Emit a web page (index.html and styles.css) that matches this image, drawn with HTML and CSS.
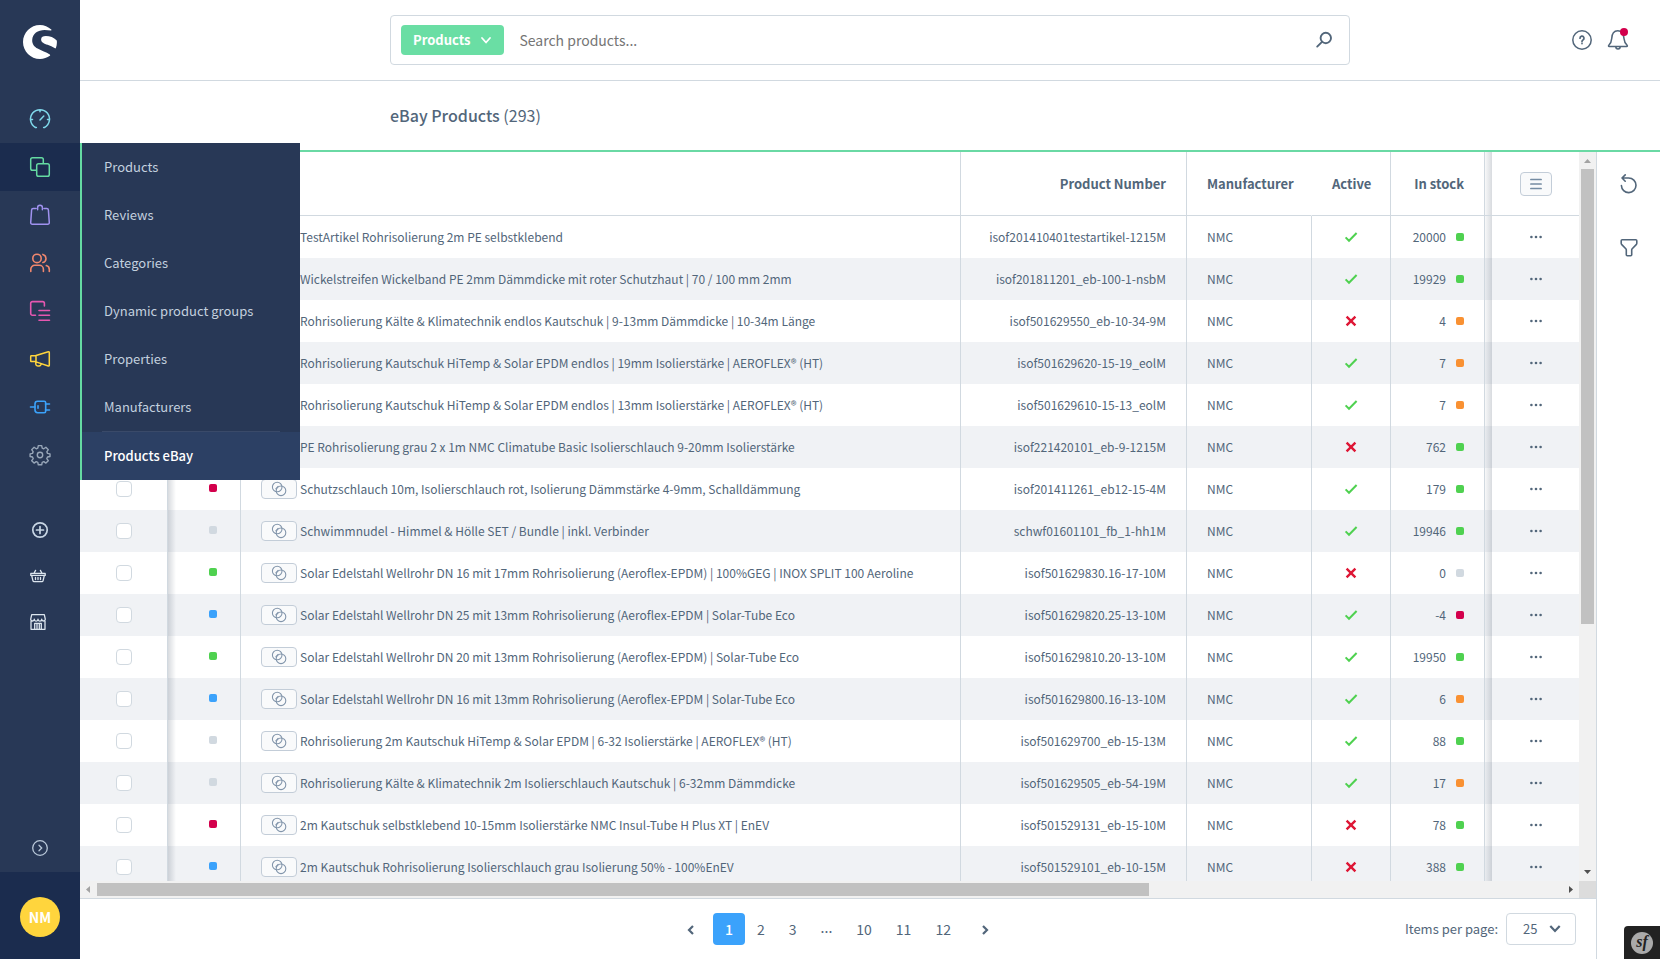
FILE: index.html
```
<!DOCTYPE html>
<html lang="en">
<head>
<meta charset="utf-8">
<title>eBay Products</title>
<link rel="stylesheet" href="styles.css">
</head>
<body>
<svg class="sprite" aria-hidden="true">
  <symbol id="i-link" viewBox="0 0 16 16"><g fill="none" stroke="#8295ab" stroke-width="1.1"><circle cx="6.2" cy="6" r="4.8"/><circle cx="10" cy="9.8" r="4.8"/><path d="M4.6 8.2 7.4 5"/></g></symbol>
  <symbol id="i-check" viewBox="0 0 14 14"><path d="M1.6 7.4 5 10.8 12.6 3" fill="none" stroke="#4fd150" stroke-width="2"/></symbol>
  <symbol id="i-cross" viewBox="0 0 14 14"><path d="M2.6 2.6 11.4 11.4M11.4 2.6 2.6 11.4" fill="none" stroke="#de1635" stroke-width="2.4"/></symbol>
  <symbol id="i-dots" viewBox="0 0 12 4"><g fill="#52667a"><circle cx="1.4" cy="2" r="1.3"/><circle cx="6" cy="2" r="1.3"/><circle cx="10.6" cy="2" r="1.3"/></g></symbol>
</svg>

<aside class="sidebar">
  <a class="logo" href="#" aria-label="Shopware">
    <svg width="34" height="34" viewBox="0 0 34 34" fill="#fff"><path d="M28.3 4.6C25.2 1.8 21.200 0 17 0 7.600 0 0 7.600 0 17s7.600 17 17 17c3.700 0 7.200-1.200 9.900-3.200.4-.3.300-.9-.1-1.200-3.600-2.600-8.300-3.600-12.200-6C11.400 21.700 9 19 9.200 14.900 9.500 8.500 15 4.900 21.500 4.900c2.300 0 4.500.3 6.500.6.500.100.700-.5.300-.9z"/><path d="M33.500 15.300c-2.500-2.800-6.600-4.300-10.700-4.300-2.600 0-4.700 1-4.700 3.400 0 2.900 3.200 4.100 6.500 5.400 2.500 1 5 2 7.400 3.500.3.200.8 0 .9-.4.900-2.300 1.200-5 .9-7.200z"/></svg>
  </a>
  <nav class="nav">
    <a href="#" aria-label="Dashboard"><svg width="22" height="22" viewBox="0 0 22 22" fill="none" stroke="#7fd8ea" stroke-width="1.500" stroke-linecap="round"><path d="M7.400 19.500H6.500A9.500 9.500 0 1 1 15.500 19.500H14.600M11 2v1.800M1.800 11.500H3.500M18.500 11.500h1.700M11 12l3.800-4"/></svg></a>
    <a href="#" aria-label="Catalogues" class="active"><svg width="22" height="22" viewBox="0 0 22 22" fill="none" stroke="#65dba2" stroke-width="1.500"><rect x="7.700" y="7.700" width="12.600" height="12.600" rx="1.800"/><path d="M7.700 14.300H3.500a1.800 1.800 0 0 1-1.800-1.800V3.500a1.800 1.800 0 0 1 1.800-1.800h9a1.800 1.800 0 0 1 1.800 1.800V7.700"/></svg></a>
    <a href="#" aria-label="Orders"><svg width="22" height="22" viewBox="0 0 22 22" fill="none" stroke="#a092f0" stroke-width="1.500" stroke-linecap="round"><path d="M6.600 4.500H4.200a1.600 1.600 0 0 0-1.600 1.500L1.700 18.600a1.600 1.600 0 0 0 1.600 1.700h15.400a1.600 1.600 0 0 0 1.600-1.700L19.400 6a1.600 1.600 0 0 0-1.600-1.500h-2.400M8.600 5.800V3.600a2.400 2.400 0 0 1 4.800 0V5.800M8.600 4.500h-.5M13.400 4.500h.5"/></svg></a>
    <a href="#" aria-label="Customers"><svg width="22" height="22" viewBox="0 0 22 22" fill="none" stroke="#f0876e" stroke-width="1.600" stroke-linecap="round"><circle cx="8" cy="6.400" r="4.200"/><path d="M1.800 19.500v-2.200a4 4 0 0 1 4-4h4.600a4 4 0 0 1 4 4v2.200M13.900 2.400a4.200 4.200 0 0 1 0 8.100M17.300 13.600a4 4 0 0 1 3 3.800v2.100"/></svg></a>
    <a href="#" aria-label="Content"><svg width="22" height="22" viewBox="0 0 22 22" fill="none" stroke="#e557b0" stroke-width="1.600" stroke-linecap="round"><path d="M6.500 15.300H3.400a1.700 1.700 0 0 1-1.700-1.700V3.300a1.700 1.700 0 0 1 1.700-1.700h10.300a1.700 1.700 0 0 1 1.700 1.700V6M10 10.500h10.500M10 15.300h10.500M10 20.200h10.500"/></svg></a>
    <a href="#" aria-label="Marketing"><svg width="22" height="22" viewBox="0 0 22 22" fill="none" stroke="#ffd53d" stroke-width="1.500" stroke-linejoin="round"><path d="M7 7.500 19.300 3.700a.8.800 0 0 1 1 .8v12.700a.8.800 0 0 1-1 .8L7 13.900zM7 7.800H2.400a.7.700 0 0 0-.7.700v4.400a.7.700 0 0 0 .7.700H7M6.800 14v2.200a2 2 0 0 0 2 1.800h1.300a2 2 0 0 0 1.900-2.200"/></svg></a>
    <a href="#" aria-label="Extensions"><svg width="22" height="22" viewBox="0 0 22 22" fill="none" stroke="#3ba2fb" stroke-width="1.600" stroke-linecap="round"><path d="M1.500 11H6M16.500 8h4M16.500 14h4M9 9.800v2.400"/><path d="M8.600 5.300h6.600a1.500 1.500 0 0 1 1.500 1.500v8.400a1.500 1.500 0 0 1-1.500 1.500H8.600A2.600 2.600 0 0 1 6 14.100V7.900a2.600 2.600 0 0 1 2.600-2.600z"/></svg></a>
    <a href="#" aria-label="Settings"><svg width="22" height="22" viewBox="0 0 22 22" fill="none" stroke="#98a6b8" stroke-width="1.400" stroke-linejoin="round"><circle cx="11" cy="11" r="2.700"/><path d="M9.300 1.600h3.400l.5 2.500 1.600.7 2.100-1.500 2.400 2.400-1.500 2.100.7 1.600 2.500.5v2.600l-2.500.5-.7 1.600 1.500 2.100-2.400 2.400-2.100-1.500-1.600.7-.5 2.500H9.300l-.5-2.500-1.600-.7-2.100 1.500-2.400-2.400 1.500-2.100-.7-1.600L1.100 12.500V9.900l2.400-.5.7-1.600-1.500-2.100 2.400-2.400 2.100 1.500 1.600-.7z"/></svg></a>
    <div class="flyout">
      <a href="#">Products</a><a href="#">Reviews</a><a href="#">Categories</a><a href="#">Dynamic product groups</a><a href="#">Properties</a><a href="#">Manufacturers</a>
      <hr>
      <a href="#" class="current">Products eBay</a>
    </div>
  </nav>
  <nav class="nav channels">
    <a href="#" aria-label="Add sales channel"><svg width="18" height="18" viewBox="0 0 18 18" fill="none" stroke="#c8d6e5" stroke-width="1.700" stroke-linecap="round"><circle cx="9" cy="9" r="7.200"/><path d="M9 5.500v7M5.500 9h7"/></svg></a>
    <a href="#" class="shift" aria-label="Storefront"><svg width="16" height="16" viewBox="0 0 16 16" fill="none" stroke="#dce5ee" stroke-width="1.300" stroke-linecap="round" stroke-linejoin="round"><path d="M.8 5.400h14.400v2H.8zM1.700 7.500l1.200 5.200a1.300 1.300 0 0 0 1.300 1h7.600a1.300 1.300 0 0 0 1.300-1L14.300 7.500M5.500 9.500v2M8 9.500v2M10.500 9.500v2M4 5.200 5.600 2.400M12 5.200 10.400 2.400"/></svg></a>
    <a href="#" class="shift" aria-label="Shop"><svg width="16" height="16" viewBox="0 0 16 16" fill="none" stroke="#dce5ee" stroke-width="1.300" stroke-linejoin="round"><path d="M1.700.7h12.600l1 4.500a1.700 1.700 0 0 1-3.600 0 1.700 1.700 0 0 1-3.700 0 1.700 1.700 0 0 1-3.700 0 1.700 1.700 0 0 1-3.600 0zM1 7v8.300h14V7M4.700 15V9.300h6.600V15M7 9.500V15M9.300 9.500V15"/></svg></a>
  </nav>
  <button class="collapse" aria-label="Expand menu"><svg width="18" height="18" viewBox="0 0 18 18" fill="none" stroke="#b9c8d9" stroke-width="1.300" stroke-linecap="round"><circle cx="9" cy="9" r="7.300"/><path d="M8 6.300 10.700 9 8 11.700"/></svg></button>
  <div class="user"><button class="avatar">NM</button></div>
</aside>

<main class="page">
  <header class="topbar">
    <form class="search">
      <button type="button" class="scope">Products <svg width="12" height="12" viewBox="0 0 12 12" fill="none" stroke="#fff" stroke-width="1.800" stroke-linecap="round" stroke-linejoin="round"><path d="M2 4l4 4.500L10 4"/></svg></button>
      <input type="text" placeholder="Search products..." aria-label="Search products">
      <button type="submit" class="icon" aria-label="Search"><svg width="18" height="18" viewBox="0 0 18 18" fill="none" stroke="#52667a" stroke-width="1.900" stroke-linecap="round"><circle cx="10.800" cy="7" r="5.200"/><path d="M7 10.800 2.200 15.600"/></svg></button>
    </form>
    <div class="tools">
      <button class="icon" aria-label="Help"><svg width="22" height="22" viewBox="0 0 22 22" fill="none" stroke="#52667a" stroke-width="1.500" stroke-linecap="round"><circle cx="11" cy="11" r="9.200"/><path d="M9 9.200a2 2 0 1 1 3 1.700c-.7.400-1 .8-1 1.500M11 14.400v.2" stroke-width="1.700"/></svg></button>
      <button class="icon" aria-label="Notifications"><svg width="22" height="22" viewBox="0 0 22 22" fill="none" stroke="#52667a" stroke-width="1.500" stroke-linejoin="round"><path d="M2.200 17.500c-.8 0-.9-.8-.4-1.300C3.700 14.500 4.500 12.500 4.700 9.600 4.900 5 6.400 1.800 10.800 1.800S16.700 5 17 9.600c.2 2.900 1.400 4.900 3.100 6.600.5.500.3 1.300-.4 1.300zM8.800 17.800a2.200 2.200 0 0 0 4.400 0"/></svg><span class="badge"></span></button>
    </div>
  </header>

  <div class="smartbar"><h1>eBay Products <span>(293)</span></h1></div>

  <div class="content">
    <section class="listing">
      <div class="scroller">
        <div class="viewport">
          <table class="grid">
            <colgroup><col class="c-select"><col class="c-status"><col><col class="c-number"><col class="c-maker"><col class="c-active"><col class="c-stock"><col class="c-actions"></colgroup>
            <thead><tr><th class="select"></th><th class="status"></th><th></th><th class="number">Product Number</th><th class="maker">Manufacturer</th><th class="active">Active</th><th class="stock">In stock</th><th class="actions"><button class="columns" aria-label="Columns"><svg width="12" height="12" viewBox="0 0 12 12" stroke="#758ca3" stroke-width="1.700" stroke-linecap="round"><path d="M.9 1.500h10.200M.9 6h10.200M.9 10.500h10.200"/></svg></button></th></tr></thead>
            <tbody>
              <tr><td class="select"><input type="checkbox" aria-label="Select"></td><td class="status"><i class="dot green"></i></td><td class="title"><div><button class="link" aria-label="Link"><svg width="16" height="16"><use href="#i-link"/></svg></button>TestArtikel Rohrisolierung 2m PE selbstklebend</div></td><td class="number">isof201410401testartikel-1215M</td><td class="maker">NMC</td><td class="active"><svg width="14" height="14"><use href="#i-check"/></svg></td><td class="stock"><div>20000<i class="dot green"></i></div></td><td class="actions"><button class="more" aria-label="Actions"><svg width="12" height="4"><use href="#i-dots"/></svg></button></td></tr>
              <tr><td class="select"><input type="checkbox" aria-label="Select"></td><td class="status"><i class="dot green"></i></td><td class="title"><div><button class="link" aria-label="Link"><svg width="16" height="16"><use href="#i-link"/></svg></button>Wickelstreifen Wickelband PE 2mm Dämmdicke mit roter Schutzhaut | 70 / 100 mm 2mm</div></td><td class="number">isof201811201_eb-100-1-nsbM</td><td class="maker">NMC</td><td class="active"><svg width="14" height="14"><use href="#i-check"/></svg></td><td class="stock"><div>19929<i class="dot green"></i></div></td><td class="actions"><button class="more" aria-label="Actions"><svg width="12" height="4"><use href="#i-dots"/></svg></button></td></tr>
              <tr><td class="select"><input type="checkbox" aria-label="Select"></td><td class="status"><i class="dot red"></i></td><td class="title"><div><button class="link" aria-label="Link"><svg width="16" height="16"><use href="#i-link"/></svg></button>Rohrisolierung Kälte &amp; Klimatechnik endlos Kautschuk | 9-13mm Dämmdicke | 10-34m Länge</div></td><td class="number">isof501629550_eb-10-34-9M</td><td class="maker">NMC</td><td class="active"><svg width="14" height="14"><use href="#i-cross"/></svg></td><td class="stock"><div>4<i class="dot orange"></i></div></td><td class="actions"><button class="more" aria-label="Actions"><svg width="12" height="4"><use href="#i-dots"/></svg></button></td></tr>
              <tr><td class="select"><input type="checkbox" aria-label="Select"></td><td class="status"><i class="dot green"></i></td><td class="title"><div><button class="link" aria-label="Link"><svg width="16" height="16"><use href="#i-link"/></svg></button>Rohrisolierung Kautschuk HiTemp &amp; Solar EPDM endlos | 19mm Isolierstärke | AEROFLEX® (HT)</div></td><td class="number">isof501629620-15-19_eolM</td><td class="maker">NMC</td><td class="active"><svg width="14" height="14"><use href="#i-check"/></svg></td><td class="stock"><div>7<i class="dot orange"></i></div></td><td class="actions"><button class="more" aria-label="Actions"><svg width="12" height="4"><use href="#i-dots"/></svg></button></td></tr>
              <tr><td class="select"><input type="checkbox" aria-label="Select"></td><td class="status"><i class="dot green"></i></td><td class="title"><div><button class="link" aria-label="Link"><svg width="16" height="16"><use href="#i-link"/></svg></button>Rohrisolierung Kautschuk HiTemp &amp; Solar EPDM endlos | 13mm Isolierstärke | AEROFLEX® (HT)</div></td><td class="number">isof501629610-15-13_eolM</td><td class="maker">NMC</td><td class="active"><svg width="14" height="14"><use href="#i-check"/></svg></td><td class="stock"><div>7<i class="dot orange"></i></div></td><td class="actions"><button class="more" aria-label="Actions"><svg width="12" height="4"><use href="#i-dots"/></svg></button></td></tr>
              <tr><td class="select"><input type="checkbox" aria-label="Select"></td><td class="status"><i class="dot red"></i></td><td class="title"><div><button class="link" aria-label="Link"><svg width="16" height="16"><use href="#i-link"/></svg></button>PE Rohrisolierung grau 2 x 1m NMC Climatube Basic Isolierschlauch 9-20mm Isolierstärke</div></td><td class="number">isof221420101_eb-9-1215M</td><td class="maker">NMC</td><td class="active"><svg width="14" height="14"><use href="#i-cross"/></svg></td><td class="stock"><div>762<i class="dot green"></i></div></td><td class="actions"><button class="more" aria-label="Actions"><svg width="12" height="4"><use href="#i-dots"/></svg></button></td></tr>
              <tr><td class="select"><input type="checkbox" aria-label="Select"></td><td class="status"><i class="dot red"></i></td><td class="title"><div><button class="link" aria-label="Link"><svg width="16" height="16"><use href="#i-link"/></svg></button>Schutzschlauch 10m, Isolierschlauch rot, Isolierung Dämmstärke 4-9mm, Schalldämmung</div></td><td class="number">isof201411261_eb12-15-4M</td><td class="maker">NMC</td><td class="active"><svg width="14" height="14"><use href="#i-check"/></svg></td><td class="stock"><div>179<i class="dot green"></i></div></td><td class="actions"><button class="more" aria-label="Actions"><svg width="12" height="4"><use href="#i-dots"/></svg></button></td></tr>
              <tr><td class="select"><input type="checkbox" aria-label="Select"></td><td class="status"><i class="dot gray"></i></td><td class="title"><div><button class="link" aria-label="Link"><svg width="16" height="16"><use href="#i-link"/></svg></button>Schwimmnudel - Himmel &amp; Hölle SET / Bundle | inkl. Verbinder</div></td><td class="number">schwf01601101_fb_1-hh1M</td><td class="maker">NMC</td><td class="active"><svg width="14" height="14"><use href="#i-check"/></svg></td><td class="stock"><div>19946<i class="dot green"></i></div></td><td class="actions"><button class="more" aria-label="Actions"><svg width="12" height="4"><use href="#i-dots"/></svg></button></td></tr>
              <tr><td class="select"><input type="checkbox" aria-label="Select"></td><td class="status"><i class="dot green"></i></td><td class="title"><div><button class="link" aria-label="Link"><svg width="16" height="16"><use href="#i-link"/></svg></button>Solar Edelstahl Wellrohr DN 16 mit 17mm Rohrisolierung (Aeroflex-EPDM) | 100%GEG | INOX SPLIT 100 Aeroline</div></td><td class="number">isof501629830.16-17-10M</td><td class="maker">NMC</td><td class="active"><svg width="14" height="14"><use href="#i-cross"/></svg></td><td class="stock"><div>0<i class="dot gray"></i></div></td><td class="actions"><button class="more" aria-label="Actions"><svg width="12" height="4"><use href="#i-dots"/></svg></button></td></tr>
              <tr><td class="select"><input type="checkbox" aria-label="Select"></td><td class="status"><i class="dot blue"></i></td><td class="title"><div><button class="link" aria-label="Link"><svg width="16" height="16"><use href="#i-link"/></svg></button>Solar Edelstahl Wellrohr DN 25 mit 13mm Rohrisolierung (Aeroflex-EPDM | Solar-Tube Eco</div></td><td class="number">isof501629820.25-13-10M</td><td class="maker">NMC</td><td class="active"><svg width="14" height="14"><use href="#i-check"/></svg></td><td class="stock"><div>-4<i class="dot red"></i></div></td><td class="actions"><button class="more" aria-label="Actions"><svg width="12" height="4"><use href="#i-dots"/></svg></button></td></tr>
              <tr><td class="select"><input type="checkbox" aria-label="Select"></td><td class="status"><i class="dot green"></i></td><td class="title"><div><button class="link" aria-label="Link"><svg width="16" height="16"><use href="#i-link"/></svg></button>Solar Edelstahl Wellrohr DN 20 mit 13mm Rohrisolierung (Aeroflex-EPDM) | Solar-Tube Eco</div></td><td class="number">isof501629810.20-13-10M</td><td class="maker">NMC</td><td class="active"><svg width="14" height="14"><use href="#i-check"/></svg></td><td class="stock"><div>19950<i class="dot green"></i></div></td><td class="actions"><button class="more" aria-label="Actions"><svg width="12" height="4"><use href="#i-dots"/></svg></button></td></tr>
              <tr><td class="select"><input type="checkbox" aria-label="Select"></td><td class="status"><i class="dot blue"></i></td><td class="title"><div><button class="link" aria-label="Link"><svg width="16" height="16"><use href="#i-link"/></svg></button>Solar Edelstahl Wellrohr DN 16 mit 13mm Rohrisolierung (Aeroflex-EPDM | Solar-Tube Eco</div></td><td class="number">isof501629800.16-13-10M</td><td class="maker">NMC</td><td class="active"><svg width="14" height="14"><use href="#i-check"/></svg></td><td class="stock"><div>6<i class="dot orange"></i></div></td><td class="actions"><button class="more" aria-label="Actions"><svg width="12" height="4"><use href="#i-dots"/></svg></button></td></tr>
              <tr><td class="select"><input type="checkbox" aria-label="Select"></td><td class="status"><i class="dot gray"></i></td><td class="title"><div><button class="link" aria-label="Link"><svg width="16" height="16"><use href="#i-link"/></svg></button>Rohrisolierung 2m Kautschuk HiTemp &amp; Solar EPDM | 6-32 Isolierstärke | AEROFLEX® (HT)</div></td><td class="number">isof501629700_eb-15-13M</td><td class="maker">NMC</td><td class="active"><svg width="14" height="14"><use href="#i-check"/></svg></td><td class="stock"><div>88<i class="dot green"></i></div></td><td class="actions"><button class="more" aria-label="Actions"><svg width="12" height="4"><use href="#i-dots"/></svg></button></td></tr>
              <tr><td class="select"><input type="checkbox" aria-label="Select"></td><td class="status"><i class="dot gray"></i></td><td class="title"><div><button class="link" aria-label="Link"><svg width="16" height="16"><use href="#i-link"/></svg></button>Rohrisolierung Kälte &amp; Klimatechnik 2m Isolierschlauch Kautschuk | 6-32mm Dämmdicke</div></td><td class="number">isof501629505_eb-54-19M</td><td class="maker">NMC</td><td class="active"><svg width="14" height="14"><use href="#i-check"/></svg></td><td class="stock"><div>17<i class="dot orange"></i></div></td><td class="actions"><button class="more" aria-label="Actions"><svg width="12" height="4"><use href="#i-dots"/></svg></button></td></tr>
              <tr><td class="select"><input type="checkbox" aria-label="Select"></td><td class="status"><i class="dot red"></i></td><td class="title"><div><button class="link" aria-label="Link"><svg width="16" height="16"><use href="#i-link"/></svg></button>2m Kautschuk selbstklebend 10-15mm Isolierstärke NMC Insul-Tube H Plus XT | EnEV</div></td><td class="number">isof501529131_eb-15-10M</td><td class="maker">NMC</td><td class="active"><svg width="14" height="14"><use href="#i-cross"/></svg></td><td class="stock"><div>78<i class="dot green"></i></div></td><td class="actions"><button class="more" aria-label="Actions"><svg width="12" height="4"><use href="#i-dots"/></svg></button></td></tr>
              <tr><td class="select"><input type="checkbox" aria-label="Select"></td><td class="status"><i class="dot blue"></i></td><td class="title"><div><button class="link" aria-label="Link"><svg width="16" height="16"><use href="#i-link"/></svg></button>2m Kautschuk Rohrisolierung Isolierschlauch grau Isolierung 50% - 100%EnEV</div></td><td class="number">isof501529101_eb-10-15M</td><td class="maker">NMC</td><td class="active"><svg width="14" height="14"><use href="#i-cross"/></svg></td><td class="stock"><div>388<i class="dot green"></i></div></td><td class="actions"><button class="more" aria-label="Actions"><svg width="12" height="4"><use href="#i-dots"/></svg></button></td></tr>
            </tbody>
          </table>
        </div>
        <div class="vbar"><svg width="17" height="17" viewBox="0 0 17 17"><path d="M5 11h7L8.500 7z" fill="#a3a3a3"/></svg><div class="track"><div class="thumb"></div></div><svg width="17" height="17" viewBox="0 0 17 17"><path d="M5 6h7l-3.500 4z" fill="#505050"/></svg></div>
        <div class="hbar"><svg width="17" height="17" viewBox="0 0 17 17"><path d="M10 5v7L6 8.500z" fill="#a3a3a3"/></svg><div class="track"><div class="thumb"></div></div><svg width="17" height="17" viewBox="0 0 17 17"><path d="M7 5v7l4-3.500z" fill="#505050"/></svg></div>
        <div class="corner"></div>
      </div>
      <footer class="pagination">
        <nav class="pages">
          <button class="step prev" aria-label="Previous page"><svg width="10" height="12" viewBox="0 0 10 12" fill="none" stroke="#52667a" stroke-width="2.200"><path d="M7 2 3 6l4 4"/></svg></button>
          <button class="current">1</button><button>2</button><button>3</button><span>...</span><button>10</button><button>11</button><button>12</button>
          <button class="step next" aria-label="Next page"><svg width="10" height="12" viewBox="0 0 10 12" fill="none" stroke="#52667a" stroke-width="2.200"><path d="M3 2l4 4-4 4"/></svg></button>
        </nav>
        <div class="per-page">
          <label for="limit">Items per page:</label>
          <div class="select-box"><select id="limit"><option>25</option></select><svg width="12" height="10" viewBox="0 0 12 10" fill="none" stroke="#52667a" stroke-width="2.200"><path d="M1.300 2 6 7l4.700-5"/></svg></div>
        </div>
      </footer>
    </section>
    <aside class="rail">
      <button class="icon" aria-label="Refresh"><svg width="20" height="20" viewBox="0 0 20 20" fill="none" stroke="#52667a" stroke-width="1.600" stroke-linecap="round" stroke-linejoin="round"><path d="M2.400 11.500A7.300 7.300 0 1 0 9.700 4H3M6.200.9 3 4l3.200 3.200"/></svg></button>
      <button class="icon" aria-label="Filter"><svg width="20" height="20" viewBox="0 0 20 20" fill="none" stroke="#52667a" stroke-width="1.600" stroke-linejoin="round"><path d="M3.200 1.800h13.600a1 1 0 0 1 1 1v2.400a2 2 0 0 1-.6 1.400l-4 4.200a2 2 0 0 0-.5 1.400v4.600a1 1 0 0 1-1 1H8.300a1 1 0 0 1-1-1v-4.600a2 2 0 0 0-.5-1.400l-4-4.200a2 2 0 0 1-.6-1.400V2.800a1 1 0 0 1 1-1z"/></svg></button>
    </aside>
  </div>
</main>
<a class="debug" href="#" aria-label="Profiler"><span>sf</span></a>
</body>
</html>
```
FILE: styles.css
```
* { box-sizing: border-box; }
body {
  margin: 0;
  height: 100vh;
  display: flex;
  overflow: hidden;
  background: #fff;
  color: #52667a;
  font: 13px/20px "Noto Sans CJK SC", sans-serif;
}
button, input, select { font: inherit; color: inherit; margin: 0; }
button { padding: 0; border: 0; background: none; }
a { color: inherit; text-decoration: none; }
svg { display: block; flex: none; }
.sprite { position: absolute; width: 0; height: 0; }

/* Sidebar */
.sidebar {
  flex: 0 0 80px;
  display: flex;
  flex-direction: column;
  background: #283856;
}
.logo { display: flex; justify-content: center; height: 95px; padding-top: 25px; }
.nav { position: relative; display: flex; flex-direction: column; }
.nav > a { display: flex; align-items: center; justify-content: center; height: 48px; }
.nav > a.active { background: #1b2c4e; }
.channels { padding-top: 28px; }
.channels > a { height: 46px; }
.channels > .shift { padding-right: 4px; }
.collapse { display: flex; align-items: center; justify-content: center; height: 48px; margin-top: auto; }
.user {
  display: flex;
  align-items: center;
  justify-content: center;
  height: 87px;
  padding-top: 2px;
  background: #1b2c4e;
}
.avatar {
  width: 40px;
  height: 40px;
  border-radius: 50%;
  background: #ffd53d;
  color: #fff;
  font-size: 14px;
  font-weight: 700;
}
.flyout {
  position: absolute;
  z-index: 5;
  top: 48px;
  left: 80px;
  width: 220px;
  border-left: 2px solid #65dba2;
  background: #283856;
  color: #c3d0df;
}
.flyout a { display: block; padding: 14px 22px; }
.flyout hr { height: 1px; margin: 0 20px; border: 0; background: #3a4a69; }
.flyout .current { background: #2c4064; color: #fff; font-weight: 500; }

/* Header */
.page { flex: 1; min-width: 0; display: flex; flex-direction: column; }
.topbar {
  display: grid;
  grid-template-columns: 1fr minmax(0, 960px) 1fr;
  align-items: center;
  height: 81px;
  border-bottom: 1px solid #d1d9e0;
}
.search {
  grid-column: 2;
  display: flex;
  align-items: center;
  height: 50px;
  padding: 0 16px 0 10px;
  border: 1px solid #d1d9e0;
  border-radius: 4px;
}
.scope {
  display: flex;
  align-items: center;
  gap: 10px;
  height: 30px;
  padding: 0 12px;
  border-radius: 4px;
  background: #6adea4;
  color: #fff;
  font-weight: 700;
}
.search input { flex: 1; min-width: 0; padding: 0 15px; border: 0; outline: 0; background: none; font-size: 14px; }
.search input::placeholder { color: #757575; }
.icon { position: relative; display: flex; }
.tools { justify-self: end; display: flex; gap: 14px; padding-right: 31px; }
.badge { position: absolute; top: -1px; right: 1px; width: 8px; height: 8px; border-radius: 50%; background: #d3004c; }
.smartbar {
  display: flex;
  justify-content: center;
  height: 71px;
  padding-top: 21px;
  border-bottom: 2px solid #6ad9a4;
}
h1 { width: 960px; margin: 0; font-size: 16px; line-height: 26px; font-weight: 500; }
h1 span { font-weight: 400; }

/* Listing */
.content { flex: 1; min-height: 0; display: flex; }
.listing { flex: 1; min-width: 0; display: flex; flex-direction: column; }
.scroller { flex: 1; min-height: 0; display: grid; grid-template: minmax(0, 1fr) 17px / minmax(0, 1fr) 17px; }
.viewport { overflow: hidden; }
.vbar, .hbar { display: flex; background: #f1f1f1; }
.vbar { flex-direction: column; }
.track { flex: 1; display: flex; }
.vbar .track { padding: 0 2px; }
.hbar .track { padding: 2px 0; }
.thumb { background: #c1c1c1; }
.vbar .thumb { width: 100%; height: 65.5%; }
.hbar .thumb { width: 71.8%; }
.corner { background: #dcdcdc; }

.grid { width: 100%; table-layout: fixed; border-collapse: separate; border-spacing: 0; }
.c-select { width: 88px; }
.c-status { width: 73px; }
.c-number { width: 226px; }
.c-maker { width: 125px; }
.c-active { width: 79px; }
.c-stock, .c-actions { width: 94px; }
.grid th, .grid td { padding: 0 20px; border-right: 1px solid #d1d9e0; text-align: left; white-space: nowrap; }
.grid th { height: 64px; border-bottom: 1px solid #d1d9e0; font-weight: 700; }
.grid td { height: 42px; font-size: 12px; }
.grid tbody tr:nth-child(even) { background: #f0f2f5; }
.grid .number { text-align: right; }
.grid th.maker { border-right-color: transparent; }
.grid .active { text-align: center; }
.grid .active svg { margin: 0 auto; }
.grid th.stock { text-align: right; }
.stock div { display: flex; align-items: center; justify-content: flex-end; gap: 10px; }
.dot { display: block; width: 8px; height: 8px; border-radius: 2px; }
.grid .status { background: linear-gradient(to right, rgba(60, 75, 95, .2), rgba(60, 75, 95, 0) 8px); }
.status .dot { margin: 0 0 2px 21px; }
.green { background: #4fd150; }
.red { background: #d3004c; }
.orange { background: #f99132; }
.blue { background: #3ba2fb; }
.gray { background: #d1d9e0; }
.grid .select { padding: 0 0 0 36px; }
.select input {
  display: block;
  appearance: none;
  width: 16px;
  height: 16px;
  border: 1px solid #d1d9e0;
  border-radius: 4px;
  background: #fff;
}
.title div { display: flex; align-items: center; gap: 3px; }
.link {
  display: flex;
  flex: none;
  align-items: center;
  justify-content: center;
  width: 36px;
  height: 20px;
  border: 1px solid #c3cdd8;
  border-radius: 4px;
  background: #f9fafb;
}
.grid .actions {
  padding: 0 0 0 7px;
  border-right: 0;
  background: linear-gradient(to right, rgba(60, 75, 95, .04), rgba(60, 75, 95, .2) 7px, transparent 7px);
}
.more { display: flex; align-items: center; justify-content: center; width: 100%; height: 24px; }
.columns {
  display: flex;
  align-items: center;
  justify-content: center;
  width: 32px;
  height: 24px;
  margin: 0 auto;
  border: 1px solid #c3cdd8;
  border-radius: 4px;
  background: #f9fafb;
}

/* Pagination */
.pagination {
  display: grid;
  grid-template-columns: 1fr auto 1fr;
  align-items: center;
  height: 61px;
  padding: 0 20px;
  border-top: 1px solid #d1d9e0;
}
.pages { grid-column: 2; display: flex; align-items: center; font-size: 14px; }
.pages button, .pages span { height: 32px; padding: 0 12px; line-height: 28px; }
.pages .current { border-radius: 4px; background: #3ba2fb; color: #fff; font-weight: 500; }
.pages .step { display: flex; align-items: center; padding: 2px 6px 0; }
.pages .prev { margin-right: 11px; }
.pages .next { margin-left: 11px; }
.per-page { justify-self: end; display: flex; align-items: center; gap: 8px; }
.select-box { display: flex; align-items: center; height: 32px; padding: 0 14px 0 16px; border: 1px solid #d1d9e0; border-radius: 4px; }
.select-box select { appearance: none; width: 26px; padding: 0; border: 0; outline: 0; background: none; }

.rail { flex: 0 0 64px; display: flex; flex-direction: column; align-items: center; gap: 44px; padding-top: 22px; border-left: 1px solid #d1d9e0; }

.debug {
  position: fixed;
  right: 0;
  bottom: 0;
  display: flex;
  align-items: center;
  justify-content: center;
  width: 36px;
  height: 33px;
  border-radius: 4px 0 0 0;
  background: #222;
}
.debug span {
  width: 22px;
  height: 22px;
  border-radius: 50%;
  background: #aaa;
  color: #222;
  font: italic 700 16px/19px "Liberation Serif", serif;
  text-align: center;
}
```
